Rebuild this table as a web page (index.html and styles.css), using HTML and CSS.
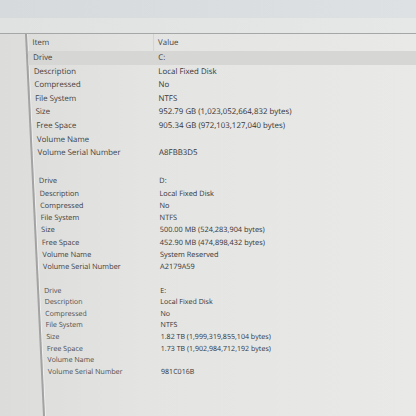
FILE: index.html
```html
<!DOCTYPE html>
<html>
<head>
<meta charset="utf-8">
<link rel="stylesheet" href="styles.css">
</head>
<body>
<div class="window">
  <div class="titlebar"></div>
  <div class="toolbar"></div>
  <div class="main">
    <div class="sidebar"></div>
    <div class="list">
      <div class="col col-item">
        <div class="head">Item</div>
        <div class="sec s1">
          <div class="cell sel">Drive</div>
          <div class="cell">Description</div>
          <div class="cell">Compressed</div>
          <div class="cell">File System</div>
          <div class="cell">Size</div>
          <div class="cell">Free Space</div>
          <div class="cell">Volume Name</div>
          <div class="cell">Volume Serial Number</div>
        </div>
        <div class="sec s2">
          <div class="cell">Drive</div>
          <div class="cell">Description</div>
          <div class="cell">Compressed</div>
          <div class="cell">File System</div>
          <div class="cell">Size</div>
          <div class="cell">Free Space</div>
          <div class="cell">Volume Name</div>
          <div class="cell">Volume Serial Number</div>
        </div>
        <div class="sec s3">
          <div class="cell">Drive</div>
          <div class="cell">Description</div>
          <div class="cell">Compressed</div>
          <div class="cell">File System</div>
          <div class="cell">Size</div>
          <div class="cell">Free Space</div>
          <div class="cell">Volume Name</div>
          <div class="cell">Volume Serial Number</div>
        </div>
      </div>
      <div class="col col-value">
        <div class="head">Value</div>
        <div class="sec s1">
          <div class="cell sel">C:</div>
          <div class="cell">Local Fixed Disk</div>
          <div class="cell">No</div>
          <div class="cell">NTFS</div>
          <div class="cell">952.79 GB (1,023,052,664,832 bytes)</div>
          <div class="cell">905.34 GB (972,103,127,040 bytes)</div>
          <div class="cell"></div>
          <div class="cell">A8FBB3D5</div>
        </div>
        <div class="sec s2">
          <div class="cell">D:</div>
          <div class="cell">Local Fixed Disk</div>
          <div class="cell">No</div>
          <div class="cell">NTFS</div>
          <div class="cell">500.00 MB (524,283,904 bytes)</div>
          <div class="cell">452.90 MB (474,898,432 bytes)</div>
          <div class="cell">System Reserved</div>
          <div class="cell">A2179A59</div>
        </div>
        <div class="sec s3">
          <div class="cell">E:</div>
          <div class="cell">Local Fixed Disk</div>
          <div class="cell">No</div>
          <div class="cell">NTFS</div>
          <div class="cell">1.82 TB (1,999,319,855,104 bytes)</div>
          <div class="cell">1.73 TB (1,902,984,712,192 bytes)</div>
          <div class="cell"></div>
          <div class="cell">981C016B</div>
        </div>
      </div>
    </div>
  </div>
</div>
</body>
</html>
```
FILE: styles.css
```css
html, body {
  margin: 0;
  padding: 0;
}
body {
  width: 416px;
  height: 416px;
  overflow: hidden;
  background: #e4e4e3;
  font-family: "Open Sans", "Noto Sans", sans-serif;
  color: #3c3c3c;
}
.window {
  display: flex;
  flex-direction: column;
  height: 416px;
}
.titlebar {
  height: 18px;
  background: linear-gradient(to right, #d6dadd, #dde1e3);
}
.toolbar {
  height: 15px;
  background: linear-gradient(to right, #e0e2e2, #e6e8e8);
  border-bottom: 1px solid #a4a6a7;
}
.main {
  flex: 1;
  display: flex;
  background: linear-gradient(to right, #dcdcdb 0%, #e4e4e3 35%, #e9e9e8 100%);
}
.sidebar {
  width: 25px;
}
.list {
  flex: 1;
  display: flex;
}
.col {
  display: flex;
  flex-direction: column;
  transform-origin: 0 0;
}
.col-item {
  width: 126px;
  border-left: 2px solid #a3a3a3;
  box-shadow: inset 1px 0 0 #efefef;
  transform: skewX(2.7deg);
}
.col-value {
  flex: 1;
  transform: skewX(0.5deg);
}
.head {
  height: 17px;
  line-height: 17px;
  font-size: 7.9px;
  color: #444444;
}
.col-item .head,
.col-item .cell {
  padding-left: 5px;
}
.col-value .head {
  border-left: 1px solid #d4d4d4;
  padding-left: 4px;
}
.col-value .cell {
  padding-left: 5px;
}
.cell {
  white-space: nowrap;
}
.sel {
  background: #d6d6d5;
}
.s1 .cell {
  height: 13.6px;
  line-height: 13.6px;
  font-size: 7.9px;
}
.s2 {
  margin-top: 14.5px;
}
.s2 .cell {
  height: 12.3px;
  line-height: 12.3px;
  font-size: 7.4px;
}
.s3 {
  margin-top: 12px;
}
.s3 .cell {
  height: 11.6px;
  line-height: 11.6px;
  font-size: 7.1px;
}
.col-item .cell {
  color: #424242;
}
.col-item .s3 .cell {
  color: #505050;
}
.col-value .cell {
  color: #353535;
}
```
